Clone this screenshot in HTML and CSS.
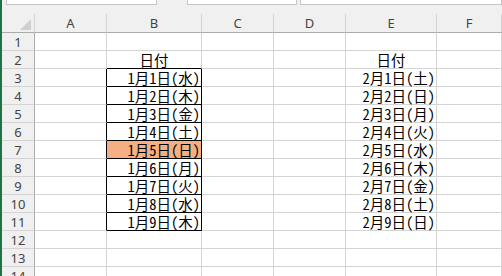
FILE: index.html
```html
<!DOCTYPE html>
<html lang="ja">
  <head>
    <meta charset="UTF-8" />
    <title>Sheet1</title>
    <link rel="stylesheet" href="styles.css">
  </head>
  <body>
    <div class="app">
      <div class="toolbar">
        <div class="box name-box"></div>
        <div class="box fx-box"></div>
        <div class="box formula-box"></div>
      </div>
      <div class="sheet">
        <div class="corner">
          <svg width="11" height="11" viewBox="0 0 11 11"><polygon points="0,11 11,11 11,0" fill="#cfcfcf" /></svg>
        </div>
        <div class="ch">A</div><div class="ch">B</div><div class="ch">C</div><div class="ch">D</div><div class="ch">E</div><div class="ch">F</div>

        <div class="rh">1</div><div class="c"></div><div class="c"></div><div class="c"></div><div class="c"></div><div class="c"></div><div class="c"></div>
        <div class="rh">2</div><div class="c"></div><div class="c mid bt">日付</div><div class="c"></div><div class="c"></div><div class="c mid">日付</div><div class="c"></div>
        <div class="rh">3</div><div class="c bl"></div><div class="c jp bx">1月1日(水)</div><div class="c"></div><div class="c"></div><div class="c jp">2月1日(土)</div><div class="c"></div>
        <div class="rh">4</div><div class="c bl"></div><div class="c jp bx">1月2日(木)</div><div class="c"></div><div class="c"></div><div class="c jp">2月2日(日)</div><div class="c"></div>
        <div class="rh">5</div><div class="c bl"></div><div class="c jp bx">1月3日(金)</div><div class="c"></div><div class="c"></div><div class="c jp">2月3日(月)</div><div class="c"></div>
        <div class="rh">6</div><div class="c bl"></div><div class="c jp bx">1月4日(土)</div><div class="c"></div><div class="c"></div><div class="c jp">2月4日(火)</div><div class="c"></div>
        <div class="rh">7</div><div class="c bl"></div><div class="c jp bx hl">1月5日(日)</div><div class="c"></div><div class="c"></div><div class="c jp">2月5日(水)</div><div class="c"></div>
        <div class="rh">8</div><div class="c bl"></div><div class="c jp bx">1月6日(月)</div><div class="c"></div><div class="c"></div><div class="c jp">2月6日(木)</div><div class="c"></div>
        <div class="rh">9</div><div class="c bl"></div><div class="c jp bx">1月7日(火)</div><div class="c"></div><div class="c"></div><div class="c jp">2月7日(金)</div><div class="c"></div>
        <div class="rh">10</div><div class="c bl"></div><div class="c jp bx">1月8日(水)</div><div class="c"></div><div class="c"></div><div class="c jp">2月8日(土)</div><div class="c"></div>
        <div class="rh">11</div><div class="c bl"></div><div class="c jp bx">1月9日(木)</div><div class="c"></div><div class="c"></div><div class="c jp">2月9日(日)</div><div class="c"></div>
        <div class="rh">12</div><div class="c"></div><div class="c"></div><div class="c"></div><div class="c"></div><div class="c"></div><div class="c"></div>
        <div class="rh">13</div><div class="c"></div><div class="c"></div><div class="c"></div><div class="c"></div><div class="c"></div><div class="c"></div>
        <div class="rh">14</div><div class="c"></div><div class="c"></div><div class="c"></div><div class="c"></div><div class="c"></div><div class="c"></div>
      </div>
    </div>
  </body>
</html>
```

FILE: styles.css
```css
* {
  box-sizing: border-box;
}
html,
body {
  margin: 0;
  height: 100%;
  overflow: hidden;
}
body {
  background: #fff;
  font-family: "Noto Sans", "Open Sans", sans-serif;
}
.app {
  height: 100%;
  border-left: 2px solid #217346;
  background: #fff;
}
.toolbar {
  display: flex;
  height: 14px;
  background: #f0f0f0;
}
.box {
  height: 5px;
  background: #fff;
  border: 1px solid #c6c6c6;
  border-top: none;
}
.name-box {
  width: 151px;
  margin-left: 4px;
}
.fx-box {
  width: 110px;
  margin-left: 30px;
}
.formula-box {
  flex: 1;
  margin-left: 3px;
}
.sheet {
  display: grid;
  grid-template-columns: 33px 72px 95px 72px 72px 91px 1fr;
  grid-template-rows: 19px;
  grid-auto-rows: 18px;
}
.corner {
  display: flex;
  align-items: flex-end;
  justify-content: flex-end;
  padding: 0 3px 2px 0;
  background: #f0f0f0;
  border-right: 1px solid #d4d4d4;
  border-bottom: 1px solid #ababab;
}
.ch {
  display: flex;
  align-items: center;
  justify-content: center;
  background: #f0f0f0;
  color: #444;
  font-size: 13px;
  line-height: 16px;
  border-right: 1px solid #d4d4d4;
  border-bottom: 1px solid #ababab;
}
.rh {
  display: flex;
  align-items: center;
  justify-content: center;
  background: #f0f0f0;
  color: #444;
  font-size: 13px;
  line-height: 16px;
  border-right: 1px solid #ababab;
  border-bottom: 1px solid #d4d4d4;
}
.c {
  display: flex;
  align-items: center;
  border-right: 1px solid #d4d4d4;
  border-bottom: 1px solid #d4d4d4;
  font-family: "Noto Sans Mono CJK JP", "Noto Sans CJK JP", monospace;
  font-size: 14.5px;
  line-height: 16px;
  color: #000;
  white-space: nowrap;
}
.mid {
  justify-content: center;
}
.jp {
  justify-content: flex-end;
  padding-right: 1px;
}
/* borders around B3:B11 */
.bt {
  border-bottom-color: #000;
}
.bl {
  border-right-color: #000;
}
.bx {
  border-right-color: #000;
  border-bottom-color: #000;
}
.hl {
  background: #f4b084;
}
```
